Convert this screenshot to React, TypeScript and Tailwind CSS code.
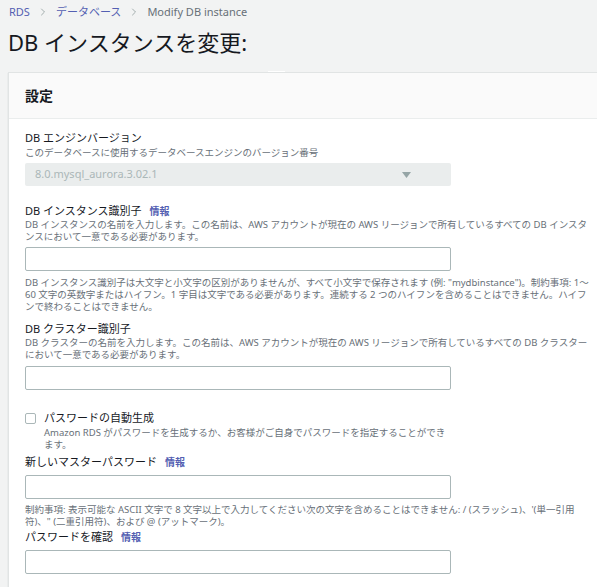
import { ChevronRight } from 'lucide-react';

const font = { fontFamily: '"Noto Sans", "Noto Sans CJK JP", sans-serif' };

function Info() {
  return <span className="ml-2 text-[10px] font-semibold text-[#545fb2]">情報</span>;
}

function Label({ children, info }: { children: React.ReactNode; info?: boolean }) {
  return (
    <div className="flex h-[14px] items-center whitespace-nowrap text-[11px] leading-[14px] text-[#16191f]">
      {children}
      {info && <Info />}
    </div>
  );
}

function Desc({ lines, className = '' }: { lines: string[]; className?: string }) {
  return (
    <div className={`text-[9.5px] leading-[12px] text-[#687078] ${className}`}>
      {lines.map((l, i) => (
        <div key={i} className="whitespace-nowrap">
          {l}
        </div>
      ))}
    </div>
  );
}

function Input({ className = '' }: { className?: string }) {
  return <div className={`h-[24px] w-[426px] rounded-[2px] border border-[#aab7b8] bg-white ${className}`} />;
}

export default function App() {
  return (
    <div className="h-[587px] w-[597px] overflow-hidden bg-[#f2f3f3]" style={font}>
      <div className="flex h-[24px] items-center gap-1 pl-[9px] text-[11px]">
        <span className="text-[#545fb2]">RDS</span>
        <ChevronRight className="mx-[3px] h-3 w-3 text-[#879596]" strokeWidth={1.5} />
        <span className="text-[#545fb2]">データベース</span>
        <ChevronRight className="mx-[3px] h-3 w-3 text-[#879596]" strokeWidth={1.5} />
        <span className="text-[#687078]">Modify DB instance</span>
      </div>
      <div className="pl-[8px] pt-[3px] text-[22px] leading-[30px] text-[#16191f]">DB インスタンスを変更:</div>
      <div className="flex h-[15px] items-end pl-[268px]">
        <div className="h-px w-[17px] bg-white" />
      </div>

      <div className="ml-[8px] w-[640px] border border-[#e1e4e4] bg-white shadow-[0_1px_1px_rgba(0,28,36,0.2)]">
        <div className="flex h-[46px] items-center border-b border-[#eaeded] bg-[#fafafa] pl-[16px] text-[14px] font-bold text-[#16191f]">
          設定
        </div>
        <div className="flex flex-col pb-[14px] pl-[16px] pt-[12px]">
          <Label>DB エンジンバージョン</Label>
          <Desc className="mt-[2px]" lines={['このデータベースに使用するデータベースエンジンのバージョン番号']} />
          <div className="mt-[4px] flex h-[23px] w-[426px] items-center justify-between rounded-[2px] bg-[#eaeded] pl-[10px] pr-[40px] text-[11px] text-[#aab7b8]">
            <span>8.0.mysql_aurora.3.02.1</span>
            <svg width="9" height="6" viewBox="0 0 9 6">
              <path d="M0 0h9L4.5 6z" fill="#95a5a6" />
            </svg>
          </div>

          <div className="mt-[18px]">
            <Label info>DB インスタンス識別子</Label>
          </div>
          <Desc
            className="mt-[1px]"
            lines={[
              'DB インスタンスの名前を入力します。この名前は、AWS アカウントが現在の AWS リージョンで所有しているすべての DB インスタ',
              'ンスにおいて一意である必要があります。',
            ]}
          />
          <Input className="mt-[4px]" />
          <Desc
            className="mt-[6px]"
            lines={[
              'DB インスタンス識別子は大文字と小文字の区別がありませんが、すべて小文字で保存されます (例: "mydbinstance")。制約事項: 1～',
              '60 文字の英数字またはハイフン。1 字目は文字である必要があります。連続する 2 つのハイフンを含めることはできません。ハイフ',
              'ンで終わることはできません。',
            ]}
          />

          <div className="mt-[9px]">
            <Label>DB クラスター識別子</Label>
          </div>
          <Desc
            className="mt-[1px]"
            lines={[
              'DB クラスターの名前を入力します。この名前は、AWS アカウントが現在の AWS リージョンで所有しているすべての DB クラスター',
              'において一意である必要があります。',
            ]}
          />
          <Input className="mt-[5px]" />

          <div className="mt-[21px] flex gap-[8px]">
            <div className="mt-[2px] h-[11px] w-[11px] rounded-[2px] border border-[#aab7b8] bg-white" />
            <div className="flex flex-col">
              <Label>パスワードの自動生成</Label>
              <Desc
                className="mt-[2px]"
                lines={['Amazon RDS がパスワードを生成するか、お客様がご自身でパスワードを指定することができ', 'ます。']}
              />
            </div>
          </div>

          <div className="mt-[4px]">
            <Label info>新しいマスターパスワード</Label>
          </div>
          <Input className="mt-[6px]" />
          <Desc
            className="mt-[5px]"
            lines={[
              "制約事項: 表示可能な ASCII 文字で 8 文字以上で入力してください次の文字を含めることはできません: / (スラッシュ)、'(単一引用",
              '符)、" (二重引用符)、および @ (アットマーク)。',
            ]}
          />

          <div className="mt-[2px]">
            <Label info>パスワードを確認</Label>
          </div>
          <Input className="mt-[6px]" />
        </div>
      </div>
    </div>
  );
}
